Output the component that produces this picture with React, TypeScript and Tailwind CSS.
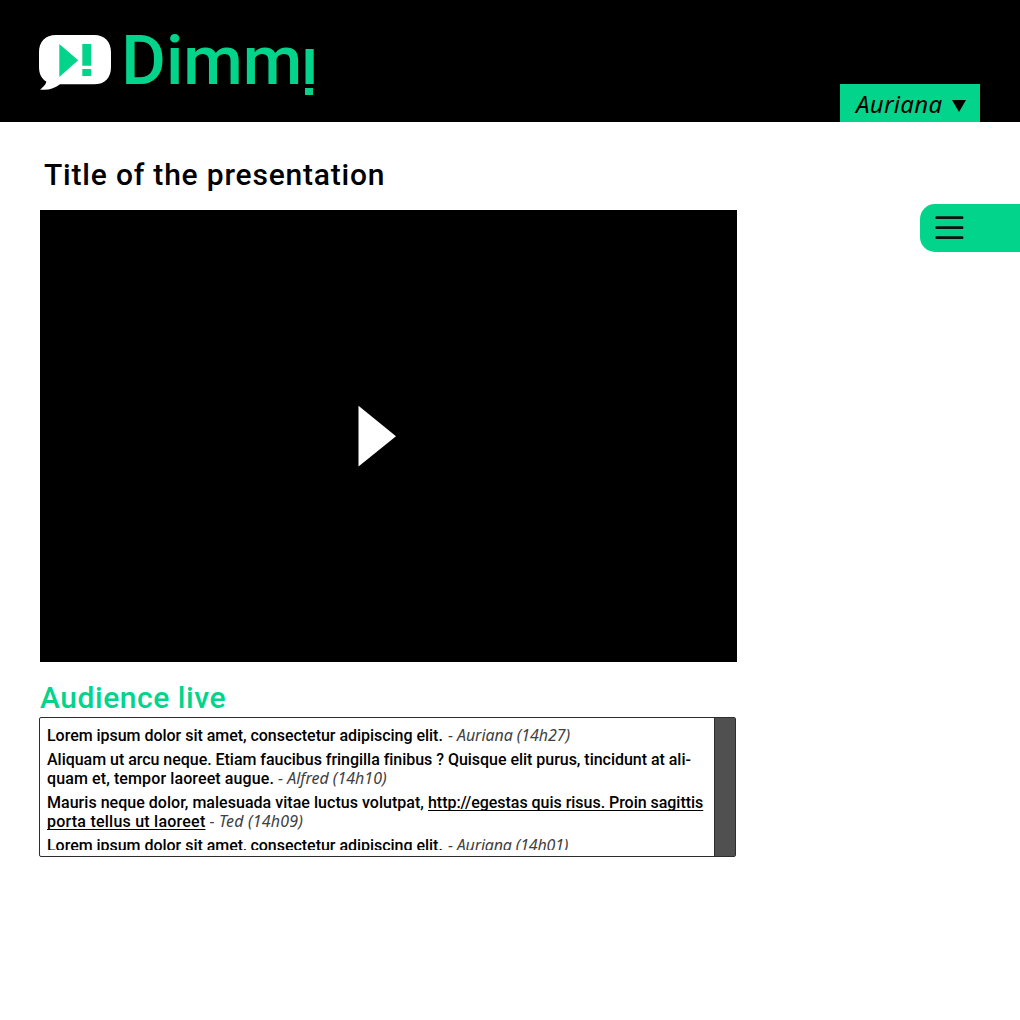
import type { ReactNode } from "react";

function Logo() {
  return (
    <svg className="block" width="320" height="122" viewBox="0 0 320 122" aria-label="Dimmi">
      <path
        d="M56 35H94C105 35 111 42 111 52V67C111 78 105 84.3 94 84.3H60C55 88.5 48 90.6 40 89.6C43 87.5 46 84.5 46.3 81.6C41.5 78.8 39 74 39 67V52C39 42 45 35 56 35Z"
        fill="#fff"
      />
      <path d="M59.3 44L78.2 60.3L59.3 77Z" fill="#03d48b" />
      <path d="M82.3 44H91.2V65.8H82.3ZM82.3 69H91.2V76H82.3Z" fill="#03d48b" />
      <text
        x="121.3"
        y="84"
        textLength="181"
        lengthAdjust="spacingAndGlyphs"
        fill="#03d48b"
        className="font-[Roboto,sans-serif] text-[69px] font-medium"
      >
        Dimm
      </text>
      <path d="M305.5 49H313.7V84H305.5ZM305 88H313V95H305Z" fill="#03d48b" />
    </svg>
  );
}

function Meta({ children, className = "" }: { children: ReactNode; className?: string }) {
  return (
    <span className={`font-['Noto_Sans',sans-serif] font-normal italic leading-none text-[#404040] ${className}`}>
      {children}
    </span>
  );
}

function Line({ children, className = "" }: { children: ReactNode; className?: string }) {
  return <div className={`flex h-[19px] items-baseline whitespace-pre ${className}`}>{children}</div>;
}

const linkStyle = "underline decoration-1 underline-offset-2 [text-decoration-skip-ink:none]";

export default function App() {
  return (
    <div className="min-h-[1020px] w-[1020px] overflow-hidden bg-white font-[Roboto,sans-serif] text-black">
      <header className="flex h-[122px] items-end justify-between bg-black pr-10">
        <Logo />
        <button className="flex h-[38px] w-[140px] items-start justify-between bg-[#03d48b] pl-[16px] pr-[14px] pt-1">
          <span className="font-['Noto_Sans',sans-serif] text-[24px] italic leading-8 tracking-[0.3px]">Auriana</span>
          <svg className="mt-[12px]" width="14" height="12" viewBox="0 0 14 12">
            <path d="M0 0H14L7 12Z" />
          </svg>
        </button>
      </header>

      <div className="flex justify-between">
        <main className="ml-[39px] w-[698px] pt-[35px]">
          <h1 className="ml-[5px] whitespace-nowrap text-[30px] font-medium leading-9 tracking-[0.8px]">
            Title of the presentation
          </h1>
          <div className="ml-px mt-[17px] flex h-[452px] w-[696.5px] items-center bg-black pl-[318px]">
            <svg width="38" height="62" viewBox="0 0 38 62">
              <path d="M0.5 0.8L38 31.2L0.5 61.5Z" fill="#fff" />
            </svg>
          </div>

          <h2 className="ml-px mt-[18px] whitespace-nowrap text-[30px] font-medium leading-9 tracking-[0.55px] text-[#03d48b]">
            Audience live
          </h2>
          <section className="mt-px flex h-[140px] w-[697px] rounded-[2px] border border-[#2d2d2d]">
            <div className="mt-1 flex h-[128px] flex-1 flex-col gap-[5px] overflow-hidden pl-[7px] pt-1 text-[16px] font-medium leading-[19px]">
              <Line className="tracking-[-0.03px]">
                <span className="w-[401px]">Lorem ipsum dolor sit amet, consectetur adipiscing elit.</span>
                <Meta className="tracking-[-0.08px]">- Auriana (14h27)</Meta>
              </Line>
              <div>
                <Line className="tracking-[-0.03px]">
                  Aliquam ut arcu neque. Etiam faucibus fringilla finibus ? Quisque elit purus, tincidunt at ali-
                </Line>
                <Line>
                  <span className="w-[231px] tracking-[0.11px]">quam et, tempor laoreet augue.</span>
                  <Meta>- Alfred (14h10)</Meta>
                </Line>
              </div>
              <div>
                <Line>
                  <span className="w-[381px] tracking-[0.03px]">Mauris neque dolor, malesuada vitae luctus volutpat,</span>
                  <a className={`tracking-[-0.03px] ${linkStyle}`}>http://egestas quis risus. Proin sagittis</a>
                </Line>
                <Line>
                  <a className={`mr-[4px] tracking-[0.23px] ${linkStyle}`}>porta tellus ut laoreet</a>
                  <Meta className="tracking-[0.18px]">- Ted (14h09)</Meta>
                </Line>
              </div>
              <Line className="shrink-0 tracking-[-0.03px]">
                <span className="w-[401px]">Lorem ipsum dolor sit amet, consectetur adipiscing elit.</span>
                <Meta className="tracking-[-0.18px]">- Auriana (14h01)</Meta>
              </Line>
            </div>
            <div className="w-[21px] border-l border-[#2d2d2d] bg-[#505050]" />
          </section>
        </main>

        <button className="mt-[81.5px] flex h-[48.5px] w-[100px] items-center rounded-l-[15px] bg-[#03d48b] pl-[15px]">
          <svg width="29" height="24" viewBox="0 0 29 24">
            <path d="M1.7 1.7H27.1M1.7 11.7H27.1M1.7 21.7H27.1" stroke="#111" strokeWidth="2.8" strokeLinecap="round" />
          </svg>
        </button>
      </div>
    </div>
  );
}
